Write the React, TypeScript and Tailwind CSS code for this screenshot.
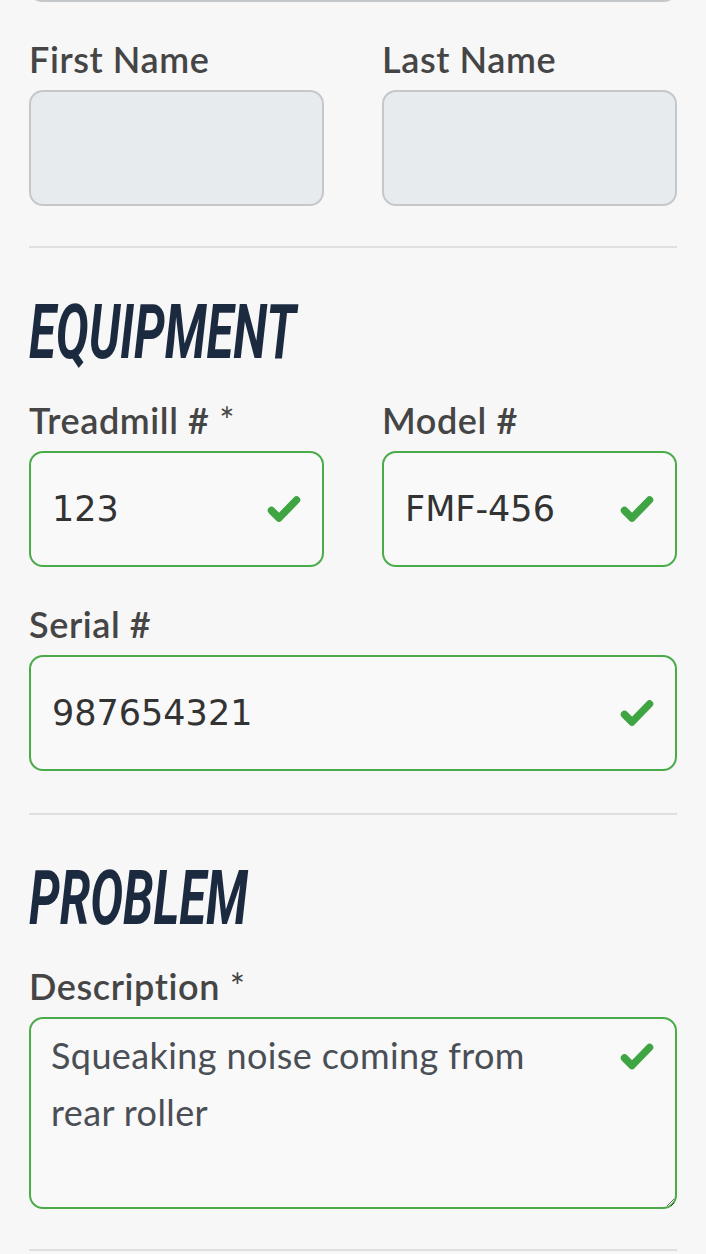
import React from "react"

function Check({ className = "" }: { className?: string }) {
  return (
    <svg viewBox="0 0 34 29" width={34} height={29} className={className} aria-hidden>
      <path
        d="M4.5 16 L12 23.5 L29.5 5.5"
        fill="none"
        stroke="#3fa442"
        strokeWidth={7.5}
        strokeLinecap="round"
        strokeLinejoin="round"
      />
    </svg>
  )
}

function Label({ text, required }: { text: string; required?: boolean }) {
  return (
    <label className="block font-['Lato',sans-serif] text-[36px] leading-none font-semibold tracking-[0.6px] text-[#454545] mb-[13px]">
      {text}
      {required && <span className="font-normal"> *</span>}
    </label>
  )
}

function EmptyField({ label }: { label: string }) {
  return (
    <div>
      <Label text={label} />
      <div className="h-[116px] rounded-[14px] border-2 border-[#c5c8cb] bg-[#e8ebee]" />
    </div>
  )
}

function ValidField({ label, value, required }: { label: string; value: string; required?: boolean }) {
  return (
    <div>
      <Label text={label} required={required} />
      <div className="relative">
        <input
          readOnly
          value={value}
          className="block w-full h-[116px] rounded-[14px] border-2 border-[#4aab4a] bg-[#f9f9f9] pl-[21px] pr-[70px] font-['DejaVu_Sans',sans-serif] text-[35px] text-[#333333] outline-none"
        />
        <Check className="absolute right-[23px] top-1/2 -translate-y-1/2" />
      </div>
    </div>
  )
}

function Heading({ children }: { children: React.ReactNode }) {
  return (
    <h2 className="font-['Roboto',sans-serif] italic font-bold text-[75px] leading-none text-[#1c2a40] scale-x-[0.655] origin-left whitespace-nowrap">
      {children}
    </h2>
  )
}

function Divider() {
  return <div className="h-[2px] bg-[#dfdfdf]" />
}

export default function App() {
  return (
    <div className="min-h-screen bg-[#f7f7f7] px-[29px] overflow-hidden">
      {/* bottom edge of the field above */}
      <div className="-mt-[28px] h-[30px] rounded-b-[14px] border-2 border-t-0 border-[#c5c8cb] bg-[#e8ebee] -mx-px" />

      <div className="mt-[39px] grid grid-cols-2 gap-x-[58px]">
        <EmptyField label="First Name" />
        <EmptyField label="Last Name" />
      </div>

      <div className="mt-[40px]">
        <Divider />
      </div>

      <div className="mt-[47px]">
        <Heading>EQUIPMENT</Heading>
      </div>

      <div className="mt-[32px] grid grid-cols-2 gap-x-[58px]">
        <ValidField label="Treadmill #" value="123" required />
        <ValidField label="Model #" value="FMF-456" />
      </div>

      <div className="mt-[39px]">
        <ValidField label="Serial #" value="987654321" />
      </div>

      <div className="mt-[42px]">
        <Divider />
      </div>

      <div className="mt-[46px]">
        <Heading>PROBLEM</Heading>
      </div>

      <div className="mt-[32px]">
        <Label text="Description" required />
        <div className="relative">
          <textarea
            readOnly
            value="Squeaking noise coming from rear roller"
            className="block w-full h-[192px] rounded-[14px] border-2 border-[#4aab4a] bg-[#f9f9f9] pl-[20px] pr-[100px] pt-[8px] font-['Lato',sans-serif] text-[36px] tracking-[0.4px] leading-[57px] text-[#4a4e55] outline-none"
          />
          <Check className="absolute right-[23px] top-[25px]" />
        </div>
      </div>

      <div className="mt-[40px]">
        <Divider />
      </div>
    </div>
  )
}
